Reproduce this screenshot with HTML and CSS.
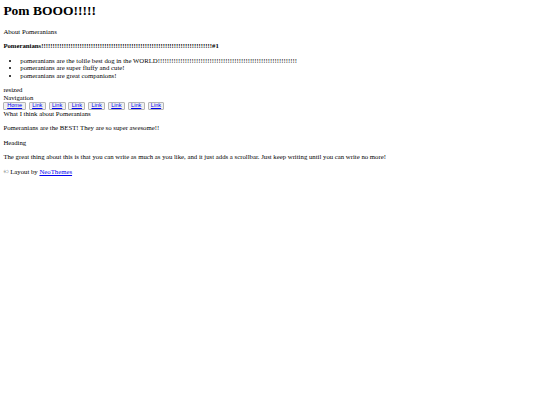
FILE: index.html
```html
<!DOCTYPE html>
<html>
<head>
<meta charset="utf-8">
<title>Pom BOOO!!!!!</title>
<link rel="stylesheet" href="styles.css">
</head>
<body>
<div class="header">
  <h1 class="title">Pom BOOO!!!!!</h1>
  <p class="about">About Pomeranians</p>
  <p class="intro"><strong>Pomeranians!!!!!!!!!!!!!!!!!!!!!!!!!!!!!!!!!!!!!!!!!!!!!!!!!!!!!!!!!!!!!!!!!!!!!!!!!!!!#1</strong></p>
  <ul class="facts">
    <li>pomeranians are the tolile best dog in the WORLD!!!!!!!!!!!!!!!!!!!!!!!!!!!!!!!!!!!!!!!!!!!!!!!!!!!!!!!!!!!!!!</li>
    <li>pomeranians are super fluffy and cute!</li>
    <li>pomeranians are great companions!</li>
  </ul>
</div>
<div class="resized">resized</div>
<div class="nav">
  <div class="nav-label">Navigation</div>
  <div class="nav-buttons">
    <button class="nav-btn nav-btn-home"><a href="#">Home</a></button>
    <button class="nav-btn"><a href="#">Link</a></button>
    <button class="nav-btn"><a href="#">Link</a></button>
    <button class="nav-btn"><a href="#">Link</a></button>
    <button class="nav-btn"><a href="#">Link</a></button>
    <button class="nav-btn"><a href="#">Link</a></button>
    <button class="nav-btn"><a href="#">Link</a></button>
    <button class="nav-btn"><a href="#">Link</a></button>
  </div>
</div>
<div class="main">
  <div class="main-title">What I think about Pomeranians</div>
  <p>Pomeranians are the BEST! They are so super awesome!!</p>
  <p>Heading</p>
  <p>The great thing about this is that you can write as much as you like, and it just adds a scrollbar. Just keep writing until you can write no more!</p>
</div>
<div class="footer">
  <p>&copy; Layout by <a href="#">NeoThemes</a></p>
</div>
</body>
</html>
```

FILE: styles.css
```css
html {
  background: #ffffff;
}
body {
  margin: 3.375px;
  font-family: "Liberation Serif", "Times New Roman", serif;
  font-size: 6.75px;
  line-height: 7.5px;
  color: #000000;
}
a {
  color: #0000ee;
  text-decoration: underline;
}
p {
  margin: 7px 0;
}
.title {
  margin: 0 0 9.4px;
  font-size: 13.5px;
  line-height: 15.5px;
  font-weight: bold;
}
.about {
  margin: 0 0 6.5px;
}
.intro {
  margin: 0;
}
.facts {
  margin: 7px 0 7px;
  padding-left: 16.875px;
}
.resized {
  margin: 0;
}
.nav {
  margin-top: 0.5px;
}
.nav-buttons {
  display: flex;
  gap: 2.9px;
  margin-top: 0.6px;
}
.nav-btn {
  font-family: "Liberation Sans", Arial, sans-serif;
  font-size: 5.625px;
  line-height: 5.3px;
  padding: 0 2.3px;
  margin: 0;
  border: 1px solid #b5b5b5;
  border-radius: 1px;
  background: #f0f0f0;
}
.nav-btn-home {
  padding: 0 2.8px;
}
.main-title {
  margin: 0;
}
.main p {
  margin: 7px 0;
}
.footer p {
  margin: 7px 0;
}
```
